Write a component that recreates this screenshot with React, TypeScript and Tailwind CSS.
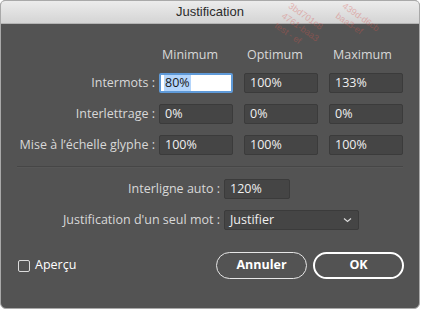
import React from "react";

const font = { fontFamily: '"Open Sans", "Liberation Sans", sans-serif' };

function Field({ value, w = "w-[74px]" }: { value: string; w?: string }) {
  return (
    <div
      className={`${w} h-[20px] bg-[#454545] border border-[#3b3b3b] rounded-[2px] flex items-center pl-[5px] text-[12.5px] text-[#f0f0f0]`}
    >
      {value}
    </div>
  );
}

function Label({ children }: { children: React.ReactNode }) {
  return (
    <div className="h-[20px] flex items-center justify-end pr-[4px] text-[12.5px] text-[#d8d8d8] whitespace-nowrap">
      {children}
    </div>
  );
}

export default function App() {
  return (
    <div className="w-[421px] h-[311px] bg-white relative overflow-hidden" style={font}>
      <div className="w-[420px] h-[309px] border border-[#a9a9a9] rounded-t-[5px] rounded-b-[6px] overflow-hidden flex flex-col bg-[#535353]">
        {/* Title bar */}
        <div className="h-[23px] shrink-0 bg-gradient-to-b from-[#ececec] to-[#d4d4d4] border-b border-[#b4b4b4] flex items-center justify-center">
          <span
            className="text-[13px] text-[#2b2b2b]"
            style={{ fontFamily: '"Liberation Sans", Arial, sans-serif' }}
          >
            Justification
          </span>
        </div>

        {/* Body */}
        <div className="flex-1 flex flex-col">
          {/* Grid */}
          <div className="grid grid-cols-[158px_85px_85px_74px] gap-y-[11px] pt-[24px]">
            <div />
            <div className="h-[14px] flex items-center pl-[3px] text-[12.5px] text-[#d8d8d8]">Minimum</div>
            <div className="h-[14px] flex items-center pl-[3px] text-[12.5px] text-[#d8d8d8]">Optimum</div>
            <div className="h-[14px] flex items-center pl-[4px] text-[12.5px] text-[#d8d8d8]">Maximum</div>

            <Label>Intermots :</Label>
            <div className="w-[74px] h-[20px] bg-white border-2 border-[#5f9ad8] rounded-[2px] flex items-center pl-[3px] text-[12.5px] text-[#1a1a1a]">
              <span className="bg-[#b4d5fb] px-[1px] leading-[16px]">80%</span>
            </div>
            <Field value="100%" />
            <Field value="133%" />

            <Label>Interlettrage :</Label>
            <Field value="0%" />
            <Field value="0%" />
            <Field value="0%" />

            <Label>Mise à l’échelle glyphe :</Label>
            <Field value="100%" />
            <Field value="100%" />
            <Field value="100%" />
          </div>

          {/* Separator */}
          <div className="mx-[16px] mt-[11px] h-[2px] bg-[#464646] border-b border-[#575757]" />

          {/* Lower fields */}
          <div className="grid grid-cols-[223px_auto] gap-y-[11px] mt-[11px]">
            <Label>Interligne auto :</Label>
            <Field value="120%" w="w-[66px]" />
            <Label>Justification d'un seul mot :</Label>
            <div className="w-[135px] h-[20px] bg-[#454545] border border-[#3b3b3b] rounded-[2px] flex items-center justify-between pl-[5px] pr-[6px] text-[12.5px] text-[#f0f0f0]">
              <span>Justifier</span>
              <svg width="9" height="6" viewBox="0 0 9 6" fill="none">
                <path d="M1 1.5 L4.5 4.5 L8 1.5" stroke="#d8d8d8" strokeWidth="1.2" />
              </svg>
            </div>
          </div>

          {/* Bottom row */}
          <div className="flex items-center mt-[22px] pl-[17px] pr-[15px]">
            <div className="flex items-center gap-[5px]">
              <div className="w-[12px] h-[12px] border border-[#dcdcdc] rounded-[2px]" />
              <span className="text-[12.5px] text-white">Aperçu</span>
            </div>
            <div className="flex-1" />
            <div className="flex gap-[6px]">
              <div className="w-[91px] h-[27px] rounded-full border-[1.5px] border-[#e6e6e6] flex items-center justify-center text-[12.5px] font-bold text-white">
                Annuler
              </div>
              <div className="w-[91px] h-[27px] rounded-full border-2 border-white flex items-center justify-center text-[12.5px] font-bold text-white">
                OK
              </div>
            </div>
          </div>
        </div>
      </div>

      {/* Watermark */}
      <div className="absolute right-0 top-0 w-[140px] h-[60px] pointer-events-none">
        <div
          className="absolute left-[12px] top-[0px] text-[9px] leading-[12px] text-[#d9534f] opacity-35 whitespace-nowrap"
          style={{ transform: "rotate(35deg)", transformOrigin: "left top", fontFamily: '"Liberation Sans", sans-serif' }}
        >
          <div>3bd701c8</div>
          <div>4761-baa3</div>
          <div>test - ef</div>
        </div>
        <div
          className="absolute left-[66px] top-[0px] text-[9px] leading-[12px] text-[#d9534f] opacity-35 whitespace-nowrap"
          style={{ transform: "rotate(35deg)", transformOrigin: "left top", fontFamily: '"Liberation Sans", sans-serif' }}
        >
          <div>439d-d6cb</div>
          <div>baa3-ef</div>
        </div>
      </div>
    </div>
  );
}
